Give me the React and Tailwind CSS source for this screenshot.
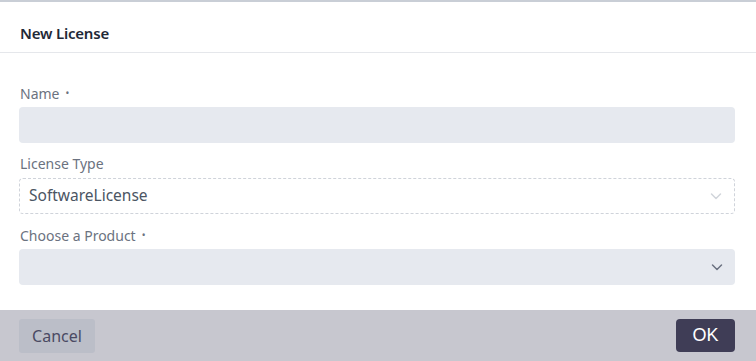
import React from "react";

const font = { fontFamily: '"Noto Sans", "Open Sans", sans-serif' };

function Chevron({ className }) {
  return (
    <svg viewBox="0 0 16 16" className={className} fill="none" stroke="currentColor" strokeWidth="1.5" strokeLinecap="round" strokeLinejoin="round">
      <path d="M3.5 6l4.5 4.5L12.5 6" />
    </svg>
  );
}

function Label({ children, required }) {
  return (
    <div className="flex items-center h-[20px] text-[14px] text-[#6b7280]">
      {children}
      {required && <span className="ml-[6px] text-[10px] text-[#6b7280]">•</span>}
    </div>
  );
}

export default function App() {
  return (
    <div className="w-[756px] h-[361px] bg-white flex flex-col overflow-hidden" style={font}>
      <div className="h-[2px] bg-[#c9ced6] shrink-0" />
      <div className="h-[51px] shrink-0 pt-[21px] px-[20px] border-b border-[#e5e7eb]">
        <h1 className="h-[20px] leading-[20px] text-[15px] font-semibold text-[#1f2937] tracking-[-0.2px]">New License</h1>
      </div>
      <div className="flex-1 flex flex-col pl-[19px] pr-[21px] pt-[30px]">
        <div className="pl-[1px]"><Label required>Name</Label></div>
        <div className="mt-[4px] h-[36px] rounded-[4px] bg-[#e6e9ef]" />
        <div className="mt-[10px] pl-[1px]"><Label>License Type</Label></div>
        <div className="mt-[5px] h-[36px] rounded-[4px] border border-dashed border-[#cfd3da] flex items-center justify-between pl-[9px] pr-[10px]">
          <span className="text-[15.5px] text-[#4b5563]">SoftwareLicense</span>
          <Chevron className="w-[16px] h-[16px] text-[#d1d5db]" />
        </div>
        <div className="mt-[11px] pl-[1px]"><Label required>Choose a Product</Label></div>
        <div className="mt-[4px] h-[36px] rounded-[4px] bg-[#e6e9ef] flex items-center justify-end pr-[10px]">
          <Chevron className="w-[16px] h-[16px] text-[#6b7280]" />
        </div>
      </div>
      <div className="h-[51px] shrink-0 bg-[#c7c7cf] flex items-center justify-between pl-[19px] pr-[21px]">
        <button className="h-[34px] w-[76px] rounded-[3px] bg-[#bbbec8] text-[16px] text-[#4a4a63]">Cancel</button>
        <button
          className="h-[33px] w-[59px] rounded-[4px] bg-[#3f3d56] text-[18px] text-white font-medium"
          style={{ fontFamily: '"Liberation Sans", Arial, sans-serif' }}
        >
          OK
        </button>
      </div>
    </div>
  );
}
